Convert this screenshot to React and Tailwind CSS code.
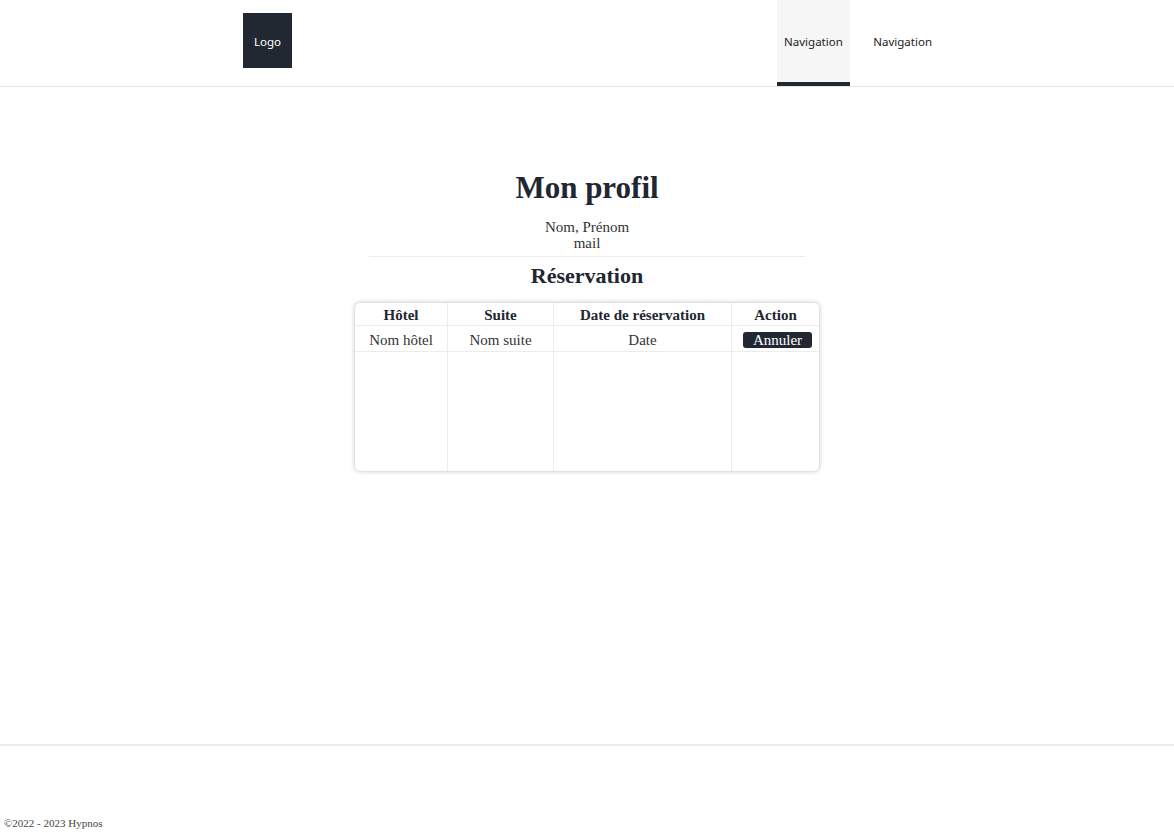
import React from "react";

const serif = { fontFamily: '"Liberation Serif", "DejaVu Serif", serif' };
const sans = { fontFamily: '"Noto Sans", "Open Sans", sans-serif' };

export default function App() {
  const cols = ["Hôtel", "Suite", "Date de réservation", "Action"];
  return (
    <div className="min-h-screen bg-white text-[#212631] flex flex-col">
      <header className="h-[87px] border-b border-[#e6e6e6] bg-white" style={sans}>
        <div className="w-[688px] mx-auto h-full flex justify-between items-stretch">
          <div className="mt-[13px] w-[49px] h-[55px] bg-[#222832] flex items-center justify-center text-white text-[11.5px] pt-[2px]">
            Logo
          </div>
          <nav className="flex items-stretch gap-[15px] mr-[-9px]">
            <a className="flex items-center px-[7.5px] bg-[#f6f6f6] border-b-4 border-[#222832] text-[11.5px] text-[#222] pt-[2px]">
              Navigation
            </a>
            <a className="flex items-center px-[8px] border-b-4 border-transparent text-[11.5px] text-[#222] pt-[2px]">
              Navigation
            </a>
          </nav>
        </div>
      </header>

      <main className="h-[657px] flex flex-col items-center pt-[83px]" style={serif}>
        <h1 className="text-[31px] leading-[35px] font-bold">Mon profil</h1>
        <p className="mt-[14px] text-[15px] leading-[16px] text-[#333]">Nom, Prénom</p>
        <p className="text-[15px] leading-[16px] text-[#333]">mail</p>
        <div className="mt-[5px] w-[436px] border-t border-[#ececec]" />
        <h2 className="mt-[6px] text-[22px] leading-[26px] font-bold">Réservation</h2>
        <div className="mt-[14px] w-[464px] h-[168px] rounded-[5px] bg-white shadow-[0_0_5px_rgba(0,0,0,0.28)] overflow-hidden grid grid-cols-[93px_106px_178px_87px] grid-rows-[23px_26px_1fr]">
          {cols.map((c, i) => (
            <div
              key={c}
              className={`flex items-center justify-center pt-[2px] font-bold text-[15px] border-b border-[#ececec] ${i < 3 ? "border-r" : ""}`}
            >
              {c}
            </div>
          ))}
          <div className="flex items-center justify-center pt-[3px] text-[15px] text-[#333] border-b border-r border-[#ececec]">Nom hôtel</div>
          <div className="flex items-center justify-center pt-[3px] text-[15px] text-[#333] border-b border-r border-[#ececec]">Nom suite</div>
          <div className="flex items-center justify-center pt-[3px] text-[15px] text-[#333] border-b border-r border-[#ececec]">Date</div>
          <div className="flex items-center justify-center pt-[2px] border-b border-[#ececec]">
            <button className="ml-[4px] w-[69px] h-[16px] rounded-[3px] bg-[#222832] text-white text-[15px] leading-[16px]">
              Annuler
            </button>
          </div>
          <div className="border-r border-[#ececec]" />
          <div className="border-r border-[#ececec]" />
          <div className="border-r border-[#ececec]" />
          <div />
        </div>
      </main>

      <footer className="flex-1 border-t-2 border-[#ececec] flex items-end px-[4px] pb-[3px]" style={serif}>
        <p className="text-[11px] leading-[14px] text-[#444]">©2022 - 2023 Hypnos</p>
      </footer>
    </div>
  );
}
